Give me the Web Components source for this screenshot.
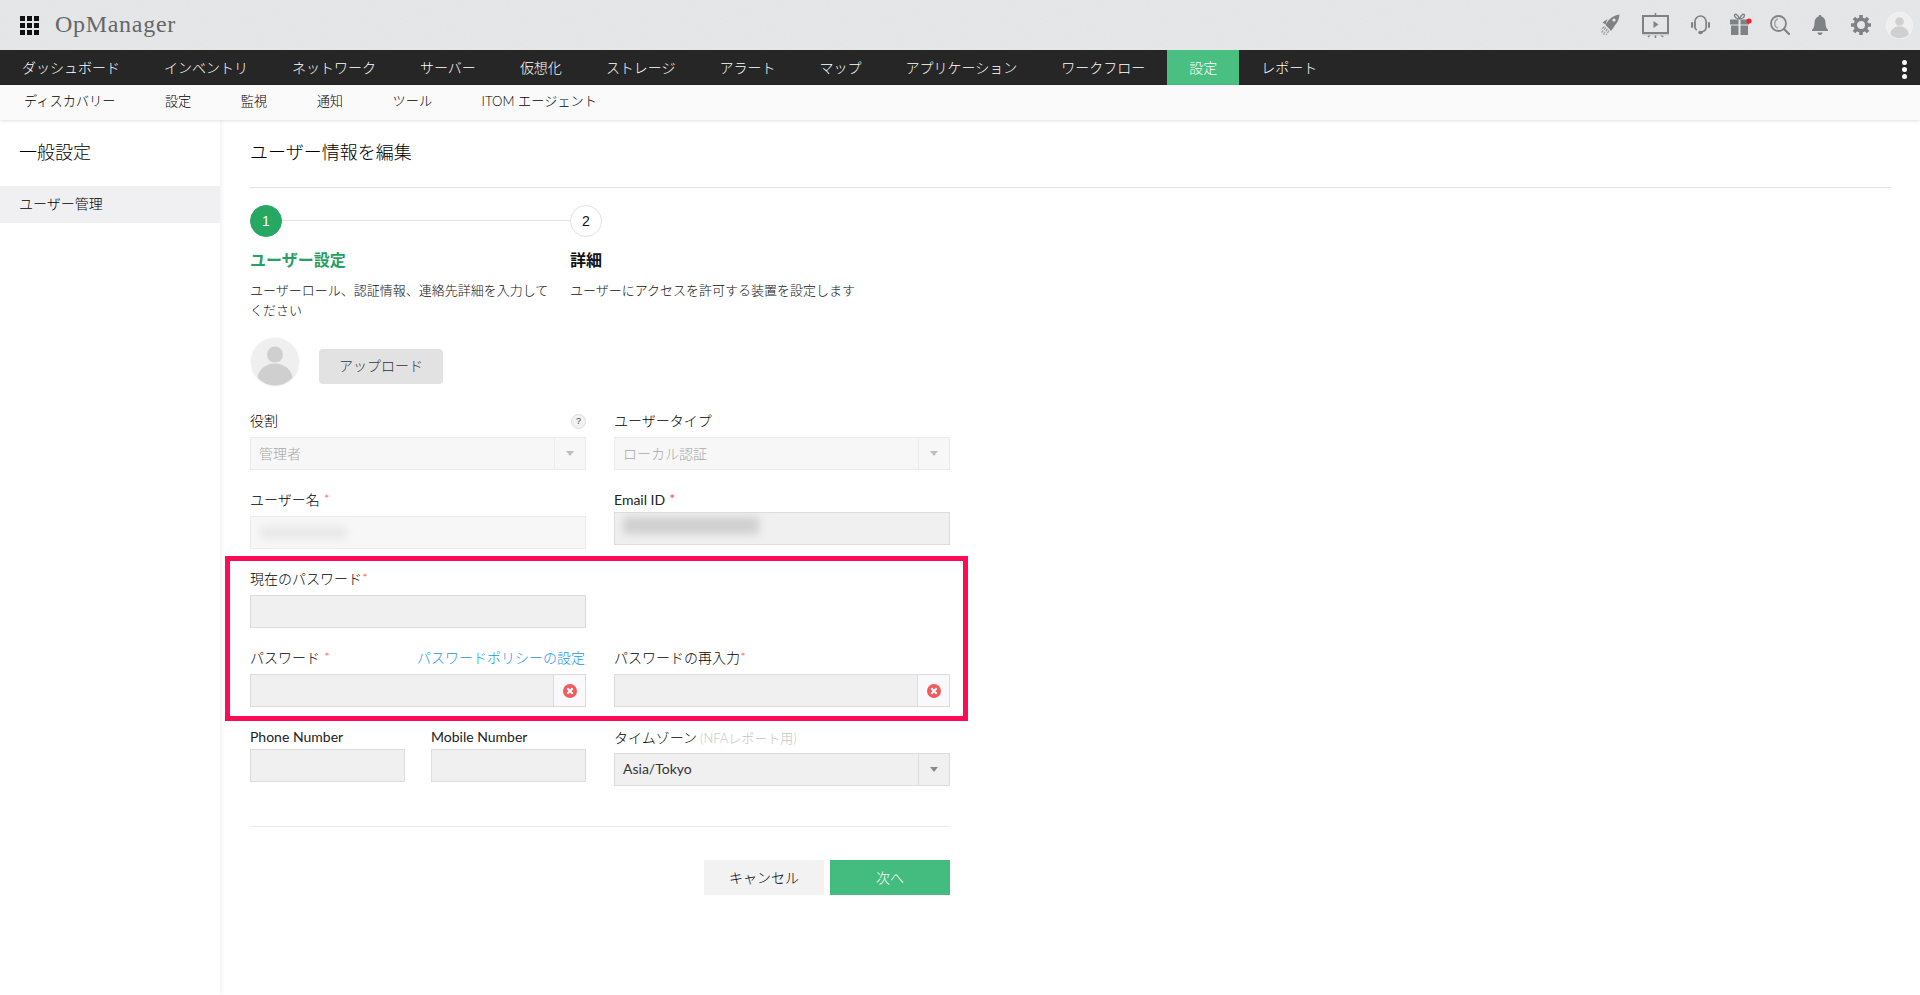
<!DOCTYPE html>
<html lang="ja">
<head>
<meta charset="utf-8">
<title>OpManager</title>
<style>
html,body{margin:0;height:100%;overflow:hidden;background:#fff}
body{font-family:"Lato","Noto Sans CJK JP",sans-serif;font-size:14px;color:#222;display:flex;flex-direction:column;height:995px}
</style>
</head>
<body>
<app-header></app-header>
<main-nav></main-nav>
<sub-nav></sub-nav>
<page-body>
  <side-bar></side-bar>
  <user-form></user-form>
</page-body>

<script>
function def(name, css, html){
  customElements.define(name, class extends HTMLElement{
    constructor(){super();const s=this.attachShadow({mode:'open'});
      s.innerHTML='<style>'+css+'</style>'+(typeof html==='function'?html(this):html);}
  });
}
const G='#7f8285';
const avatarSvg=(s)=>`<svg width="${s}" height="${s}" viewBox="0 0 50 50" style="display:block"><defs><clipPath id="c"><circle cx="25" cy="25" r="23.5"/></clipPath></defs><circle cx="25" cy="25" r="24.5" fill="#efefef" stroke="#f9f9f9"/><g clip-path="url(#c)"><circle cx="25" cy="17.5" r="8" fill="#cfcfcf"/><ellipse cx="25" cy="42" rx="17.5" ry="15.5" fill="#cfcfcf"/></g></svg>`;

def('app-header',`
:host{display:flex;align-items:center;height:50px;flex:none;background:#e6e7e9;padding-right:7px;box-sizing:border-box;position:relative;overflow:hidden}
.tex{position:absolute;inset:0;width:100%;height:100%}
.grid{display:grid;grid-template-columns:repeat(3,5px);grid-auto-rows:5px;gap:2px;margin-left:20px;flex:none;position:relative}
.grid i{background:#111;display:block}
.brand{font:24px/1 "Liberation Serif",serif;color:#666;margin:-3px 0 0 16px;letter-spacing:.7px;position:relative}
.icons{margin-left:auto;display:flex;align-items:center;position:relative}
svg{display:block;flex:none}
`,()=>`
<svg class="tex" aria-hidden="true"><filter id="n"><feTurbulence type="fractalNoise" baseFrequency=".8" numOctaves="2"/><feColorMatrix values="0 0 0 0 .6 0 0 0 0 .6 0 0 0 0 .6 0 0 0 .2 -.05"/></filter><rect width="100%" height="100%" filter="url(#n)"/></svg>
<div class="grid">${'<i></i>'.repeat(9)}</div>
<div class="brand">OpManager</div>
<div class="icons">
<svg style="margin-top:-1px" width="20" height="22" viewBox="0 0 20 22"><path fill="${G}" d="M19.500 .5C13 1.500 8 5.500 5.500 11L9.500 15C15 12.500 19 7.500 19.500 .5Z"/><circle cx="14" cy="6" r="1.600" fill="#e6e7e9"/><path fill="${G}" d="M7.500 5 2.500 8.500l3 2ZM15 11.500 11 17l-2-2.500Z"/><path stroke="#9fa1a3" stroke-width="1.300" stroke-dasharray="3 1" fill="none" d="M6 13.500 1.500 18.500M7.500 15 3 21M9 16.500 6 21M4.500 12.500 1 15.500"/></svg>
<svg style="margin-left:22px" width="27" height="25" viewBox="0 0 27 25"><path stroke="${G}" stroke-width="1.500" d="M13.500 0v3M13.500 21v4M8.500 21l-2.500 3M18.500 21l2.500 3"/><rect x="1" y="3" width="25" height="17" fill="none" stroke="${G}" stroke-width="2"/><rect y="21" width="27" height="1.500" fill="#cfd0d2"/><path fill="${G}" d="M11.500 8 16.500 11.500 11.500 15Z"/></svg>
<svg style="margin-left:22px" width="19" height="20" viewBox="0 0 19 20"><path fill="none" stroke="${G}" stroke-width="1.700" d="M3.800 12V7a5.700 6 0 0 1 11.400 0v5c0 3-2 4.500-5 5"/><path fill="none" stroke="${G}" stroke-width="1.700" d="M3.800 7v5c0 1.500 1 2.500 2 3"/><rect y="7" width="2" height="6" rx="1" fill="${G}"/><rect x="17" y="7" width="2" height="6" rx="1" fill="${G}"/><ellipse cx="9.500" cy="17.500" rx="2.300" ry="1.700" fill="${G}"/></svg>
<svg style="margin:-3px 0 0 20px" width="22" height="22" viewBox="0 0 22 22"><path fill="none" stroke="${G}" stroke-width="1.400" d="M9.500 6C7 6 4.500 4.500 4.500 2.500 4.500 .5 7.500 .5 9.500 6ZM9.500 6C11.500 6 14.500 4.500 14.500 2.500 14.500 .5 11.500 .5 9.500 6Z"/><path fill="${G}" d="M0 6.500h8.500v5H0ZM10.500 6.500H19v5h-8.500ZM1 12.500h7.500V22H1ZM10.500 12.500H18V22h-7.500Z"/><circle cx="19" cy="8" r="2.600" fill="#f5222d"/></svg>
<svg style="margin-left:18px" width="20" height="20" viewBox="0 0 20 20"><circle cx="8.500" cy="8.500" r="7.500" fill="none" stroke="${G}" stroke-width="1.800"/><path stroke="${G}" stroke-width="2.200" stroke-linecap="round" d="M14 14l5 5"/><path fill="none" stroke="#9a9c9f" stroke-width="1.300" d="M8 3.800a5 5 0 0 0 0 9.400"/></svg>
<svg style="margin-left:22px" width="16" height="20" viewBox="0 0 16 20"><path fill="${G}" d="M8 0c1 0 1.500.7 1.500 1.500C12.500 2.500 13.500 5 13.500 8c0 3 .8 5 2.500 7v1H0v-1c1.700-2 2.500-4 2.500-7 0-3 1-5.500 4-6.500C6.500.7 7 0 8 0Z"/><path fill="${G}" d="M5.500 17.500h5C10.500 19 9.300 20 8 20s-2.500-1-2.500-2.500Z"/></svg>
<svg style="margin-left:23px" width="20" height="20" viewBox="0 0 20 20"><circle cx="10" cy="10" r="5.700" fill="none" stroke="${G}" stroke-width="3.400"/><g stroke="${G}" stroke-width="3.600"><path d="M10 0v4M10 16v4M0 10h4M16 10h4M2.900 2.900l2.900 2.900M14.200 14.200l2.900 2.900M17.100 2.900l-2.900 2.900M5.800 14.200l-2.900 2.900"/></g></svg>
<span style="margin-left:15px;display:block;width:27px;height:27px;margin-top:1px">${avatarSvg(27)}</span>
</div>`);

def('main-nav',`
:host{display:flex;height:35px;flex:none;background:#262626;position:relative}
a{display:block;padding:0 22px;font-size:14px;line-height:35px;color:#fff;font-weight:300;white-space:nowrap}
a.on{background:#4abf82;color:#fff}
.more{position:absolute;right:13px;top:10px;display:flex;flex-direction:column;gap:2px}
.more i{width:5px;height:5px;border-radius:50%;background:#fff;display:block}
`,()=>['ダッシュボード','インベントリ','ネットワーク','サーバー','仮想化','ストレージ','アラート','マップ','アプリケーション','ワークフロー','設定','レポート'].map(t=>`<a class="${t==='設定'?'on':''}">${t}</a>`).join('')+'<div class="more"><i></i><i></i><i></i></div>');

def('sub-nav',`
:host{display:flex;height:35px;flex:none;background:#fafafa;box-shadow:0 1px 3px rgba(0,0,0,.12);position:relative;z-index:2;padding-left:24px;gap:49.5px}
a{font-size:13.2px;line-height:33px;color:#000;font-weight:300;white-space:nowrap}
`,()=>['ディスカバリー','設定','監視','通知','ツール','ITOM エージェント'].map(t=>`<a>${t}</a>`).join(''));

def('page-body',`:host{display:flex;flex:1;min-height:0}`,'<slot></slot>');

def('side-bar',`
:host{display:block;width:220px;flex:none;background:#fff;box-shadow:1px 0 5px rgba(0,0,0,.07);position:relative;z-index:1}
h2{margin:0;height:66px;padding-left:19px;font-size:18px;font-weight:300;line-height:64px;color:#000}
.row{height:37px;line-height:36px;background:#f0f0f2;padding-left:19px;font-size:14px;font-weight:300;color:#000}
`,`<h2>一般設定</h2><div class="row">ユーザー管理</div>`);

def('step-item',`
:host{display:block;width:320px;flex:none}
:host([last]){width:auto}
.head{display:flex;align-items:center;height:32px}
.c{width:32px;height:32px;box-sizing:border-box;border-radius:50%;border:1px solid #e2e2e2;background:#fff;color:#111;font:14px/31px "Liberation Sans",sans-serif;text-align:center;flex:none}
.line{flex:1;height:1px;background:#e2e2e2;margin-top:-2px}
:host([active]) .c{background:#27a862;border-color:#27a862;color:#fff}
h3{margin:13px 0 0;font-size:16px;line-height:20px;font-weight:700;color:#111}
:host([active]) h3{color:#27a162}
p{margin:10px 0 1px;font-size:13px;line-height:20px;color:#111;font-weight:300;width:305px}
:host([last]) p{width:auto}
`,(e)=>`<div class="head"><div class="c">${e.getAttribute('n')}</div>${e.hasAttribute('last')?'':'<div class="line"></div>'}</div><h3>${e.getAttribute('t')}</h3><p>${e.getAttribute('d')}</p>`);

def('form-field',`
:host{display:block;flex:none;width:336px}
:host([half]){width:155px}
.l{display:flex;justify-content:space-between;align-items:center;height:16px;padding-top:1px;margin-bottom:8px;font-size:14px;line-height:16px;color:#000;font-weight:300;white-space:nowrap}
:host([tight]) .l{margin-bottom:4px}
:host([latin]) .l{font-weight:400;color:#222}
:host([tall]) .l{height:20px;line-height:18px;padding-top:0;margin-bottom:5px}
.req{color:#f5555d;font-size:14px;margin-left:4px;position:relative;top:-1px}
:host([nogap]) .req{margin-left:0}
.hint{color:#c4c4c4;font-size:13px;margin-left:3px}
.lt{display:block}
::slotted([slot=aside]){display:block}
`,(e)=>`<div class="l"><span class="lt">${e.getAttribute('label')}${e.hasAttribute('req')?'<span class="req">*</span>':''}${e.hasAttribute('hint')?`<span class="hint">${e.getAttribute('hint')}</span>`:''}</span><slot name="aside"></slot></div><slot></slot>`);

def('input-box',`
:host{display:flex;align-items:center;height:33px;box-sizing:border-box;border:1px solid #dcdcdc;background:#f0f0f0;overflow:hidden}
:host([soft]){background:#f7f7f7;border-color:#ececec}
.b{flex:1;min-width:0;height:100%;display:flex;align-items:center}
.x{width:31px;height:100%;flex:none;background:#f9f9fb;border-left:1px solid #dcdcdc;display:flex;align-items:center;justify-content:center}
svg{display:block}
`,(e)=>`<div class="b"><slot></slot></div>${e.hasAttribute('clear')?'<div class="x"><svg width="14" height="14" viewBox="0 0 14 14"><circle cx="7" cy="7" r="7" fill="#f25a5f"/><path stroke="#fff" stroke-width="2" d="M4.300 4.300l5.400 5.400M9.700 4.300l-5.400 5.400"/></svg></div>':''}`);

def('blur-text',`:host{display:block;background:#cfcfcf;filter:blur(4px);border-radius:3px}`,'');

def('select-box',`
:host{display:flex;align-items:center;height:33px;box-sizing:border-box;border:1px solid #dcdcdc;background:#f0f0f0;color:#333;font-size:14px}
:host([off]){background:#f7f7f7;border-color:#ececec;color:#a8a8a8}
.v{flex:1;padding:0 0 2px 8px;font-weight:400}
:host([off]) .v{font-weight:300}
.a{width:31px;height:100%;box-sizing:border-box;border-left:1px solid #dcdcdc;display:flex;align-items:center;justify-content:center}
:host([off]) .a{border-color:#ececec}
.a i{width:0;height:0;border:4px solid transparent;border-top:5px solid #8a8a8a;border-bottom:0;display:block}
:host([off]) .a i{border-top-color:#bdbdbd}
`,`<div class="v"><slot></slot></div><div class="a"><i></i></div>`);

def('action-button',`
:host{display:block;width:120px;height:35px;line-height:35px;text-align:center;background:#f2f2f2;color:#000;font-size:14px;font-weight:300}
:host([primary]){background:#44bb7f;color:#fff}
`,'<slot></slot>');

def('highlight-box',`
:host{display:flex;flex-direction:column;gap:21px;position:relative}
.mark{position:absolute;inset:-14px -18px -14px -25px;border:5px solid #ff0a54;pointer-events:none}
`,'<slot></slot><div class="mark"></div>');

def('form-row',`:host{display:flex;gap:28px;align-items:flex-start}`,'<slot></slot>');

def('user-form',`
:host{display:block;flex:1;min-width:0;padding:0 29px 0 30px}
h1{margin:0;height:67px;border-bottom:1px solid #e2e2e2;font-size:18px;font-weight:300;line-height:64px;color:#000}
.steps{display:flex;margin-top:17px}
.up{display:flex;margin-top:16px;height:50px;align-items:flex-start}
.pic{width:50px;height:50px;display:block}
.btn{margin:12px 0 0 19px;width:124px;height:35px;border-radius:4px;background:#e2e2e2;color:#333;font-size:14px;font-weight:300;line-height:34px;text-align:center}
.form{width:700px;margin-top:25px;display:flex;flex-direction:column;gap:21px}
.half{display:flex;gap:26px;width:336px}
.q{width:15px;height:15px;box-sizing:border-box;border-radius:50%;background:#f2f2f2;border:1px solid #ddd;font:9px/13px "Liberation Sans",sans-serif;text-align:center;color:#444}
a{color:#2196e8;font-size:14px;font-weight:300;margin-right:1px}
hr{border:0;height:1px;background:#ececec;margin:40px 0 0}
.foot{width:700px}
.acts{display:flex;justify-content:flex-end;gap:6px;margin-top:33px}
.b1{width:87px;height:13px;margin-left:9px;opacity:.45;background:#d6d6d6}
.b2{width:136px;height:17px;margin:-6px 0 0 8px}
`,`<h1>ユーザー情報を編集</h1>
<div class="steps">
  <step-item active n="1" t="ユーザー設定" d="ユーザーロール、認証情報、連絡先詳細を入力してください"></step-item>
  <step-item last n="2" t="詳細" d="ユーザーにアクセスを許可する装置を設定します"></step-item>
</div>
<div class="up"><span class="pic">${avatarSvg(50)}</span><div class="btn">アップロード</div></div>
<div class="form">
  <form-row>
    <form-field label="役割"><span slot="aside" class="q">?</span><select-box off>管理者</select-box></form-field>
    <form-field label="ユーザータイプ"><select-box off>ローカル認証</select-box></form-field>
  </form-row>
  <form-row>
    <form-field label="ユーザー名" req><input-box soft><blur-text class="b1"></blur-text></input-box></form-field>
    <form-field label="Email ID" req tight latin><input-box><blur-text class="b2"></blur-text></input-box></form-field>
  </form-row>
  <highlight-box>
    <form-row><form-field label="現在のパスワード" req nogap><input-box></input-box></form-field></form-row>
    <form-row>
      <form-field label="パスワード" req><a slot="aside">パスワードポリシーの設定</a><input-box clear></input-box></form-field>
      <form-field label="パスワードの再入力" req nogap><input-box clear></input-box></form-field>
    </form-row>
  </highlight-box>
  <form-row>
    <div class="half">
      <form-field half tight latin label="Phone Number"><input-box></input-box></form-field>
      <form-field half tight latin label="Mobile Number"><input-box></input-box></form-field>
    </div>
    <form-field tight tall label="タイムゾーン" hint="(NFAレポート用)"><select-box>Asia/Tokyo</select-box></form-field>
  </form-row>
</div>
<div class="foot"><hr><div class="acts"><action-button>キャンセル</action-button><action-button primary>次へ</action-button></div></div>`);
</script>
</body>
</html>
